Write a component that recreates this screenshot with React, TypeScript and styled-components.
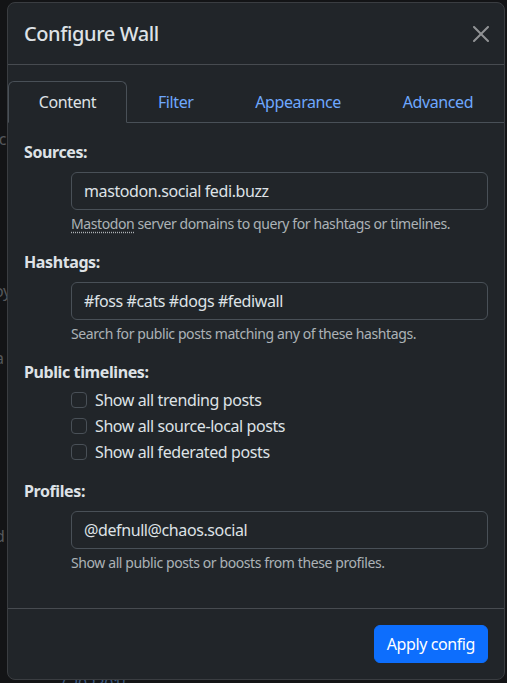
import React from "react";
import styled, { createGlobalStyle } from "styled-components";

const GlobalStyle = createGlobalStyle`
  html, body {
    margin: 0;
    padding: 0;
    background: #131416;
  }
  body {
    font-family: "Noto Sans", "Open Sans", sans-serif;
    letter-spacing: -0.025em;
    color: #dee2e6;
    -webkit-font-smoothing: antialiased;
  }
  * { box-sizing: border-box; }
`;

const Page = styled.div`
  position: relative;
  width: 507px;
  height: 683px;
  overflow: hidden;
  background: #131416;
  padding-top: 2px;
  padding-left: 7px;
`;

const Ghost = styled.span<{ $x: number; $y: number; $c?: string }>`
  position: absolute;
  left: ${(p) => p.$x}px;
  top: ${(p) => p.$y}px;
  font-size: 16px;
  line-height: 1;
  white-space: nowrap;
  color: ${(p) => p.$c || "#55585c"};
`;

const Modal = styled.div`
  position: relative;
  width: 498px;
  background: #212529;
  border: 1px solid #3a3d41;
  border-radius: 8px;
  display: flex;
  flex-direction: column;
`;

const Header = styled.div`
  display: flex;
  align-items: center;
  justify-content: space-between;
  height: 62px;
  padding: 0 15px 0 16px;
  border-bottom: 1px solid #474b50;
`;

const Title = styled.h5`
  margin: 0;
  font-size: 20px;
  font-weight: 500;
  line-height: 24px;
  color: #dee2e6;
`;

const CloseButton = styled.button`
  width: 16px;
  height: 16px;
  padding: 0;
  border: 0;
  background: transparent;
  display: flex;
  align-items: center;
  justify-content: center;
  opacity: 0.5;
  cursor: pointer;
`;

const Tabs = styled.div`
  display: flex;
  margin-top: 16px;
  border-bottom: 1px solid #495057;
`;

const Tab = styled.button<{ $active?: boolean }>`
  flex: 1 1 auto;
  text-align: center;
  font-family: inherit;
  letter-spacing: inherit;
  font-size: 16px;
  line-height: 24px;
  padding: 8px 16px;
  margin-bottom: -1px;
  background: ${(p) => (p.$active ? "#212529" : "transparent")};
  color: ${(p) => (p.$active ? "#dee2e6" : "#6ea8fe")};
  border: 1px solid ${(p) => (p.$active ? "#495057" : "transparent")};
  border-bottom-color: ${(p) => (p.$active ? "#212529" : "transparent")};
  border-top-left-radius: 6px;
  border-top-right-radius: 6px;
  cursor: pointer;
`;

const Body = styled.div`
  padding: 17px 16px 19px;
`;

const Group = styled.div<{ $mb?: number }>`
  margin-bottom: ${(p) => (p.$mb ?? 16)}px;
`;

const Label = styled.label<{ $mb?: number }>`
  display: block;
  font-weight: 700;
  font-size: 16px;
  line-height: 24px;
  margin-bottom: ${(p) => (p.$mb ?? 8)}px;
  color: #dee2e6;
`;

const Field = styled.div`
  padding-left: 47px;
`;

const Input = styled.input`
  display: block;
  width: 100%;
  height: 38px;
  padding: 6px 12px;
  font-family: inherit;
  letter-spacing: inherit;
  font-size: 16px;
  line-height: 24px;
  color: #dee2e6;
  background: #212529;
  border: 1px solid #495057;
  border-radius: 6px;
  outline: none;
`;

const Help = styled.div`
  margin-top: 4px;
  font-size: 14px;
  line-height: 20px;
  color: rgba(222, 226, 230, 0.75);
`;

const Abbr = styled.abbr`
  text-decoration: underline dotted;
  text-underline-offset: 3px;
  cursor: help;
`;

const CheckList = styled.div`
  display: flex;
  flex-direction: column;
  gap: 2px;
  padding-left: 47px;
`;

const CheckRow = styled.label`
  display: flex;
  align-items: flex-start;
  gap: 8px;
  min-height: 24px;
  font-size: 16px;
  line-height: 24px;
  color: #dee2e6;
`;

const Checkbox = styled.input`
  appearance: none;
  width: 16px;
  height: 16px;
  margin: 4px 0 0;
  flex: none;
  background: #212529;
  border: 1px solid #495057;
  border-radius: 4px;
`;

const Footer = styled.div`
  display: flex;
  justify-content: flex-end;
  padding: 12px;
  border-top: 1px solid #474b50;
`;

const PrimaryButton = styled.button`
  margin: 4px;
  height: 38px;
  padding: 6px 12px;
  font-family: inherit;
  letter-spacing: inherit;
  font-size: 16px;
  line-height: 24px;
  color: #fff;
  background: #0d6efd;
  border: 1px solid #0d6efd;
  border-radius: 6px;
  cursor: pointer;
`;

const CloseIcon = () => (
  <svg width="16" height="16" viewBox="0 0 16 16" fill="#ffffff" aria-hidden="true">
    <path d="M.293.293a1 1 0 0 1 1.414 0L8 6.586 14.293.293a1 1 0 1 1 1.414 1.414L9.414 8l6.293 6.293a1 1 0 0 1-1.414 1.414L8 9.414l-6.293 6.293a1 1 0 0 1-1.414-1.414L6.586 8 .293 1.707a1 1 0 0 1 0-1.414z" />
  </svg>
);

const tabs = ["Content", "Filter", "Appearance", "Advanced"];
const checks = [
  "Show all trending posts",
  "Show all source-local posts",
  "Show all federated posts",
];

export default function App() {
  return (
    <>
      <GlobalStyle />
      <Page>
        <Ghost $x={-5} $y={131}>ic</Ghost>
        <Ghost $x={-6} $y={283}>oy</Ghost>
        <Ghost $x={-5} $y={350}>a</Ghost>
        <Ghost $x={-5} $y={528}>d</Ghost>
        <Ghost $x={60} $y={676} $c="#3c5a80">/ 2023015</Ghost>
        <Modal>
          <Header>
            <Title>Configure Wall</Title>
            <CloseButton aria-label="Close">
              <CloseIcon />
            </CloseButton>
          </Header>
          <Tabs>
            {tabs.map((t, i) => (
              <Tab key={t} $active={i === 0}>
                {t}
              </Tab>
            ))}
          </Tabs>
          <Body>
            <Group>
              <Label>Sources:</Label>
              <Field>
                <Input defaultValue="mastodon.social fedi.buzz" />
                <Help>
                  <Abbr title="Mastodon">Mastodon</Abbr> server domains to query for hashtags or timelines.
                </Help>
              </Field>
            </Group>
            <Group>
              <Label>Hashtags:</Label>
              <Field>
                <Input defaultValue="#foss #cats #dogs #fediwall" />
                <Help>Search for public posts matching any of these hashtags.</Help>
              </Field>
            </Group>
            <Group $mb={15}>
              <Label $mb={4}>Public timelines:</Label>
              <CheckList>
                {checks.map((c) => (
                  <CheckRow key={c}>
                    <Checkbox type="checkbox" />
                    {c}
                  </CheckRow>
                ))}
              </CheckList>
            </Group>
            <Group>
              <Label>Profiles:</Label>
              <Field>
                <Input defaultValue="@defnull@chaos.social" />
                <Help>Show all public posts or boosts from these profiles.</Help>
              </Field>
            </Group>
          </Body>
          <Footer>
            <PrimaryButton>Apply config</PrimaryButton>
          </Footer>
        </Modal>
      </Page>
    </>
  );
}
